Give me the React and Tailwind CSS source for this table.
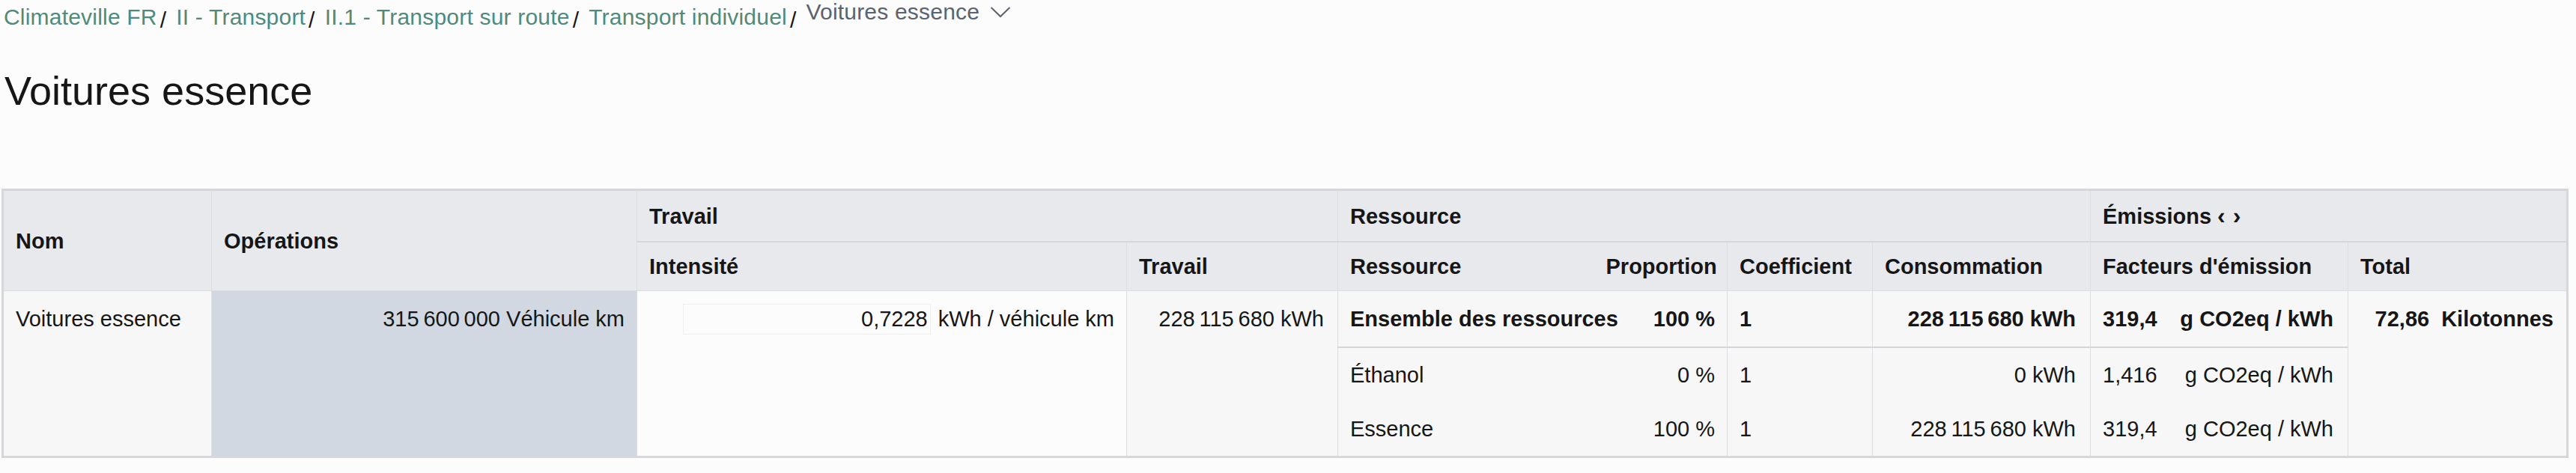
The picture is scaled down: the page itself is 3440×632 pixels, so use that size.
import React from 'react';

const crumbs = ['Climateville FR', 'II - Transport', 'II.1 - Transport sur route', 'Transport individuel'];

const resources = [
  { name: 'Ensemble des ressources', share: '100\u00a0%', coef: '1', conso: '228\u202f115\u202f680 kWh', factor: '319,4', bold: true },
  { name: 'Éthanol', share: '0\u00a0%', coef: '1', conso: '0 kWh', factor: '1,416' },
  { name: 'Essence', share: '100\u00a0%', coef: '1', conso: '228\u202f115\u202f680 kWh', factor: '319,4' },
];

// shared cell styles (background set per cell)
const th = 'border border-[#dcdde0] bg-[#e8e9ed] px-4 font-bold text-left align-middle whitespace-nowrap';
const td = 'border border-[#dcdde0] align-top whitespace-nowrap';

function Breadcrumb() {
  return (
    <nav className="flex items-start h-[42px] pl-[5px] text-[30px] tracking-[0.2px] leading-[42px]">
      {crumbs.map((c) => (
        <React.Fragment key={c}>
          <a className="mt-[2px] text-[#4f8a7b] cursor-pointer">{c}</a>
          <span className="mt-[6px] ml-[4px] mr-[13px] text-[#161616]">/</span>
        </React.Fragment>
      ))}
      <span className="-mt-[5px] flex items-center text-[#5b6370]">
        Voitures essence
        <svg width="28" height="16" viewBox="0 0 28 16" className="ml-[14px]" fill="none">
          <polyline points="1.5,2 14,14 26.5,2" stroke="#5b6370" strokeWidth="2" />
        </svg>
      </span>
    </nav>
  );
}

function ResourceRow({ r, index, total }) {
  const first = index === 0;
  const last = index === total - 1;
  const pad = first ? 'py-4 border-b-2 border-b-[#d6d7db]' : last ? 'py-[15px] border-t-0' : 'py-[15px] border-b-0';
  const weight = r.bold ? 'font-bold' : '';
  const cell = `${td} ${pad} ${weight} bg-[#f7f7f7]`;
  return (
    <>
      <td className={`${cell} pl-4 pr-0 border-r-0`}>{r.name}</td>
      <td className={`${cell} pl-1 pr-4 text-right border-l-0`}>{r.share}</td>
      <td className={`${cell} px-4`}>{r.coef}</td>
      <td className={`${cell} pl-4 pr-[19px] text-right`}>{r.conso}</td>
      <td className={`${cell} pl-4 pr-[19px]`}>
        <div className="flex justify-between">
          <span>{r.factor}</span>
          <span>g CO2eq / kWh</span>
        </div>
      </td>
    </>
  );
}

export default function App() {
  return (
    <div className="min-h-[632px] bg-[#fcfcfc] text-[#161616] font-['Liberation_Sans',Arial,sans-serif] text-[29px] leading-[42px]">
      <Breadcrumb />
      <h1 className="pl-[6px] mt-[52px] text-[54px] leading-[54px] font-normal text-[#161616]">Voitures essence</h1>

      <table className="mt-[104px] ml-[2px] w-[3425px] table-fixed border-collapse border-[3px] border-[#d6d7db]">
        <colgroup>
          <col className="w-[279px]" />
          <col className="w-[568px]" />
          <col className="w-[654px]" />
          <col className="w-[282px]" />
          <col className="w-[354px]" />
          <col className="w-[166px]" />
          <col className="w-[194px]" />
          <col className="w-[291px]" />
          <col className="w-[344px]" />
          <col className="w-[293px]" />
        </colgroup>
        <thead>
          <tr>
            <th rowSpan={2} className={th}>Nom</th>
            <th rowSpan={2} className={th}>Opérations</th>
            <th colSpan={2} className={`${th} py-3 border-b-2 border-b-[#d6d7db]`}>Travail</th>
            <th colSpan={4} className={`${th} py-3 border-b-2 border-b-[#d6d7db]`}>Ressource</th>
            <th colSpan={2} className={`${th} py-3 border-b-2 border-b-[#d6d7db]`}>
              Émissions
              <span className="ml-[8px] text-[32px]">‹</span>
              <span className="ml-[10px] text-[32px]">›</span>
            </th>
          </tr>
          <tr>
            <th className={`${th} py-[11px]`}>Intensité</th>
            <th className={`${th} py-[11px]`}>Travail</th>
            <th className={`${th} py-[11px] pr-0 border-r-0`}>Ressource</th>
            <th className={`${th} py-[11px] pl-1 text-right border-l-0`}>Proportion</th>
            <th className={`${th} py-[11px]`}>Coefficient</th>
            <th className={`${th} py-[11px]`}>Consommation</th>
            <th className={`${th} py-[11px]`}>Facteurs d'émission</th>
            <th className={`${th} py-[11px]`}>Total</th>
          </tr>
        </thead>
        <tbody>
          {resources.map((r, i) => (
            <tr key={r.name}>
              {i === 0 && (
                <>
                  <td rowSpan={3} className={`${td} px-4 py-4 bg-[#f7f7f7]`}>Voitures essence</td>
                  <td rowSpan={3} className={`${td} px-4 py-4 text-right bg-[#d1d8e2]`}>
                    315{'\u202f'}600{'\u202f'}000 Véhicule km
                  </td>
                  <td rowSpan={3} className={`${td} px-4 py-4 bg-[#fcfcfc]`}>
                    <div className="flex items-start justify-end">
                      <div className="w-[331px] h-[41px] mt-[1px] border border-[#f0f0f0] pr-[3px] text-right leading-[39px]">
                        0,7228
                      </div>
                      <span className="ml-[10px]">kWh / véhicule km</span>
                    </div>
                  </td>
                  <td rowSpan={3} className={`${td} pl-4 pr-[18px] py-4 text-right bg-[#f7f7f7]`}>
                    228{'\u202f'}115{'\u202f'}680 kWh
                  </td>
                </>
              )}
              <ResourceRow r={r} index={i} total={resources.length} />
              {i === 0 && (
                <td rowSpan={3} className={`${td} pl-4 pr-[17px] py-4 bg-[#f8f8f8] font-bold`}>
                  <div className="flex justify-end gap-[16px]">
                    <span>72,86</span>
                    <span>Kilotonnes</span>
                  </div>
                </td>
              )}
            </tr>
          ))}
        </tbody>
      </table>
    </div>
  );
}
